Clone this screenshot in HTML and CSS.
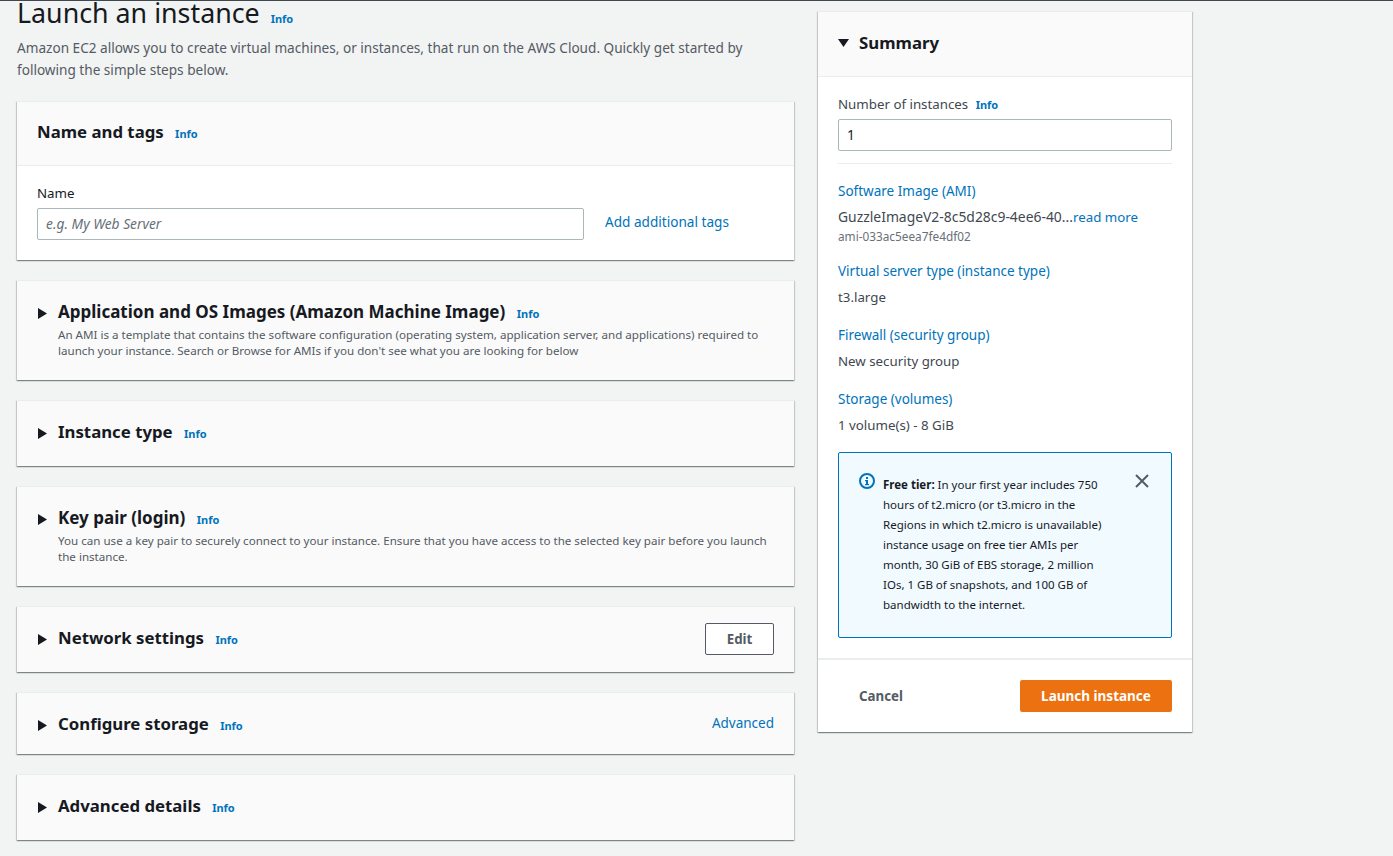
FILE: index.html
```html
<!DOCTYPE html>
<html lang="en">
<head>
    <meta charset="UTF-8">
    <meta name="viewport" content="width=device-width, initial-scale=1.0">
    <title>Launch an instance</title>
    <link rel="stylesheet" href="styles.css">
</head>
<body>
    <div class="layout">
        <main class="main-col">
            <header class="page-head">
                <h1>Launch an instance <a class="info info-h1" href="#">Info</a></h1>
                <p>Amazon EC2 allows you to create virtual machines, or instances, that run on the AWS Cloud. Quickly get started by following the simple steps below.</p>
            </header>

            <section class="card card-name">
                <div class="name-head">
                    <h2>Name and tags <a class="info" href="#">Info</a></h2>
                </div>
                <div class="name-body">
                    <label class="field-label" for="instanceName">Name</label>
                    <div class="name-row">
                        <input id="instanceName" class="text-input" type="text" placeholder="e.g. My Web Server">
                        <a class="add-tags" href="#">Add additional tags</a>
                    </div>
                </div>
            </section>

            <section class="card fold fold-ami">
                <div class="fold-title">
                    <svg class="caret" viewBox="0 0 9 11"><path d="M0 0l9 5.5-9 5.5z"/></svg>
                    <h2>Application and OS Images (Amazon Machine Image) <a class="info" href="#">Info</a></h2>
                </div>
                <p class="fold-desc">An AMI is a template that contains the software configuration (operating system, application server, and applications) required to launch your instance. Search or Browse for AMIs if you don't see what you are looking for below</p>
            </section>

            <section class="card fold fold-plain">
                <div class="fold-title">
                    <svg class="caret" viewBox="0 0 9 11"><path d="M0 0l9 5.5-9 5.5z"/></svg>
                    <h2>Instance type <a class="info" href="#">Info</a></h2>
                </div>
            </section>

            <section class="card fold fold-key">
                <div class="fold-title">
                    <svg class="caret" viewBox="0 0 9 11"><path d="M0 0l9 5.5-9 5.5z"/></svg>
                    <h2>Key pair (login) <a class="info" href="#">Info</a></h2>
                </div>
                <p class="fold-desc">You can use a key pair to securely connect to your instance. Ensure that you have access to the selected key pair before you launch the instance.</p>
            </section>

            <section class="card fold fold-plain">
                <div class="fold-title">
                    <svg class="caret" viewBox="0 0 9 11"><path d="M0 0l9 5.5-9 5.5z"/></svg>
                    <h2>Network settings <a class="info" href="#">Info</a></h2>
                    <button class="btn-edit" type="button">Edit</button>
                </div>
            </section>

            <section class="card fold fold-storage">
                <div class="fold-title">
                    <svg class="caret" viewBox="0 0 9 11"><path d="M0 0l9 5.5-9 5.5z"/></svg>
                    <h2>Configure storage <a class="info" href="#">Info</a></h2>
                    <a class="advanced" href="#">Advanced</a>
                </div>
            </section>

            <section class="card fold fold-plain">
                <div class="fold-title">
                    <svg class="caret" viewBox="0 0 9 11"><path d="M0 0l9 5.5-9 5.5z"/></svg>
                    <h2>Advanced details <a class="info" href="#">Info</a></h2>
                </div>
            </section>
        </main>

        <aside class="card summary">
            <div class="summary-head">
                <svg class="caret-down" viewBox="0 0 11 8"><path d="M0 0h11L5.5 8z"/></svg>
                <h2>Summary</h2>
            </div>
            <div class="summary-body">
                <label class="count-label" for="instanceCount">Number of instances <a class="info" href="#">Info</a></label>
                <input id="instanceCount" class="text-input count-input" type="text" value="1">
                <hr class="divider">

                <a class="sum-link" href="#">Software Image (AMI)</a>
                <div class="sum-value sum-value-ami">GuzzleImageV2-8c5d28c9-4ee6-40...<a href="#">read more</a></div>
                <div class="sum-small">ami-033ac5eea7fe4df02</div>

                <a class="sum-link" href="#">Virtual server type (instance type)</a>
                <div class="sum-value">t3.large</div>

                <a class="sum-link" href="#">Firewall (security group)</a>
                <div class="sum-value">New security group</div>

                <a class="sum-link" href="#">Storage (volumes)</a>
                <div class="sum-value">1 volume(s) - 8 GiB</div>

                <div class="notice">
                    <svg class="notice-icon" viewBox="0 0 16 16">
                        <circle cx="8" cy="8" r="7" fill="none" stroke="#0073bb" stroke-width="2"/>
                        <rect x="7" y="7" width="2" height="4.5" fill="#0073bb"/>
                        <rect x="6" y="11" width="4" height="1.2" fill="#0073bb"/>
                        <rect x="6" y="7" width="2" height="1.2" fill="#0073bb"/>
                        <rect x="7" y="4" width="2" height="2" fill="#0073bb"/>
                    </svg>
                    <p><strong>Free tier:</strong> In your first year includes 750 hours of t2.micro (or t3.micro in the Regions in which t2.micro is unavailable) instance usage on free tier AMIs per month, 30 GiB of EBS storage, 2 million IOs, 1 GB of snapshots, and 100 GB of bandwidth to the internet.</p>
                    <svg class="notice-close" viewBox="0 0 14 14"><path d="M1 1l12 12M13 1L1 13" fill="none" stroke="#545b64" stroke-width="2"/></svg>
                </div>
            </div>
            <div class="summary-foot">
                <button class="btn-cancel" type="button">Cancel</button>
                <button class="btn-launch" type="button">Launch instance</button>
            </div>
        </aside>
    </div>
</body>
</html>
```

FILE: styles.css
```css
body {
    font-family: "Noto Sans", "Open Sans", Arial, sans-serif;
    font-size: 14px;
    line-height: 22px;
    color: #16191f;
    background-color: #f2f3f3;
    margin: 0;
    padding: 0;
    border-top: 1px solid #414750;
    overflow: hidden;
}
a {
    color: #0073bb;
    text-decoration: none;
}
h1, h2, p {
    margin: 0;
}
.layout {
    display: flex;
    align-items: flex-start;
    gap: 24px;
    padding-left: 17px;
}
.main-col {
    width: 777px;
    flex: none;
}
.page-head {
    height: 100px;
}
h1 {
    font-size: 26.8px;
    line-height: 24px;
    font-weight: 400;
}
.page-head p {
    width: 740px;
    margin-top: 6px;
    font-size: 13.6px;
    line-height: 22px;
    color: #545b64;
}
.info {
    font-size: 11px;
    font-weight: 700;
    margin-left: 7px;
}
.info-h1 {
    margin-left: 4px;
}
.card {
    background-color: #fff;
    border-top: 1px solid #eaeded;
    box-shadow: 0 1px 1px 0 rgba(0, 28, 36, 0.3), 1px 1px 1px 0 rgba(0, 28, 36, 0.15), -1px 1px 1px 0 rgba(0, 28, 36, 0.15);
}
.main-col .card {
    margin-bottom: 20px;
}
h2 {
    font-size: 16.8px;
    line-height: 22px;
    font-weight: 700;
}
.fold-ami h2, .fold-key h2 {
    font-size: 17px;
}
.name-head {
    padding: 19px 20px;
    height: 64px;
    box-sizing: border-box;
    background-color: #fafafa;
    border-bottom: 1px solid #eaeded;
}
.name-body {
    padding: 16px 20px 20px;
    height: 94px;
    box-sizing: border-box;
}
.field-label {
    display: block;
    font-size: 13.3px;
    line-height: 22px;
}
.name-row {
    display: flex;
    align-items: center;
    gap: 21px;
    margin-top: 4px;
}
.text-input {
    box-sizing: border-box;
    height: 32px;
    border: 1px solid #aab7b8;
    border-radius: 2px;
    padding: 0 8px 2px;
    font-family: inherit;
    font-size: 13.8px;
    color: #16191f;
    background-color: #fff;
}
.name-row .text-input {
    width: 547px;
}
.text-input::placeholder {
    font-style: italic;
    color: #687078;
}
.add-tags {
    font-size: 13.6px;
    margin-bottom: 4px;
}
.fold {
    box-sizing: border-box;
    background-color: #fafafa;
    padding: 20px 20px 0 21px;
}
.fold-ami, .fold-key {
    height: 100px;
}
.fold-plain {
    height: 66px;
}
.fold-storage {
    height: 62px;
}
.fold-title {
    display: flex;
    align-items: center;
}
.caret {
    width: 9px;
    height: 11px;
    flex: none;
    margin-right: 11px;
    fill: #16191f;
}
.fold-title h2 {
    flex: 1;
}
.fold-desc {
    padding-left: 20px;
    margin-top: 2px;
    font-size: 11.6px;
    line-height: 16px;
    color: #545b64;
}
.btn-edit {
    box-sizing: border-box;
    width: 69px;
    height: 32px;
    margin-top: -5px;
    margin-bottom: -5px;
    border: 1px solid #545b64;
    border-radius: 2px;
    background-color: #fff;
    color: #545b64;
    font-family: inherit;
    font-size: 13.3px;
    font-weight: 700;
}
.advanced {
    font-size: 13.5px;
    line-height: 18px;
    margin-bottom: 4px;
}
.summary {
    width: 374px;
    flex: none;
    margin-top: 10px;
}
.summary-head {
    display: flex;
    align-items: center;
    height: 65px;
    padding: 0 20px 2px;
    background-color: #fafafa;
    border-bottom: 1px solid #eaeded;
    box-sizing: border-box;
}
.caret-down {
    width: 11px;
    height: 8px;
    margin-right: 10px;
    fill: #16191f;
}
.summary-body {
    padding: 16px 20px 20px;
}
.count-label {
    display: block;
    font-size: 13.3px;
    color: #414750;
}
.count-label .info {
    margin-left: 4px;
}
.count-input {
    display: block;
    width: 100%;
    margin-top: 3px;
}
.divider {
    border: 0;
    border-top: 1px solid #eaeded;
    margin: 12px 0 16px;
}
.sum-link {
    display: block;
    font-size: 13.5px;
    line-height: 22px;
}
.sum-value {
    font-size: 13.3px;
    line-height: 22px;
    color: #414750;
    margin-top: 4px;
    margin-bottom: 16px;
}
.sum-value-ami {
    font-size: 13.9px;
    margin-bottom: 0;
}
.sum-value-ami a {
    font-size: 13.3px;
}
.sum-small {
    font-size: 11.8px;
    line-height: 16px;
    color: #687078;
    margin-bottom: 16px;
}
.notice {
    display: flex;
    align-items: flex-start;
    box-sizing: border-box;
    height: 186px;
    margin-top: 16px;
    padding: 20px 22px 0 20px;
    border: 1px solid #0073bb;
    border-radius: 2px;
    background-color: #f1faff;
}
.notice-icon {
    width: 16px;
    height: 16px;
    flex: none;
    margin-right: 8px;
}
.notice p {
    width: 226px;
    flex: none;
    margin-top: 2px;
    font-size: 11.5px;
    line-height: 20px;
}
.notice-close {
    width: 14px;
    height: 14px;
    flex: none;
    margin-left: auto;
    margin-top: 1px;
}
.summary-foot {
    display: flex;
    justify-content: space-between;
    align-items: center;
    height: 74px;
    box-sizing: border-box;
    padding: 0 20px 0 41px;
    border-top: 2px solid #eaeded;
}
.btn-cancel {
    border: 0;
    padding: 0;
    background: none;
    color: #545b64;
    font-family: inherit;
    font-size: 13.3px;
    font-weight: 700;
}
.btn-launch {
    width: 152px;
    height: 32px;
    border: 0;
    border-radius: 2px;
    background-color: #ec7211;
    color: #fff;
    font-family: inherit;
    font-size: 13.5px;
    font-weight: 700;
}
```
